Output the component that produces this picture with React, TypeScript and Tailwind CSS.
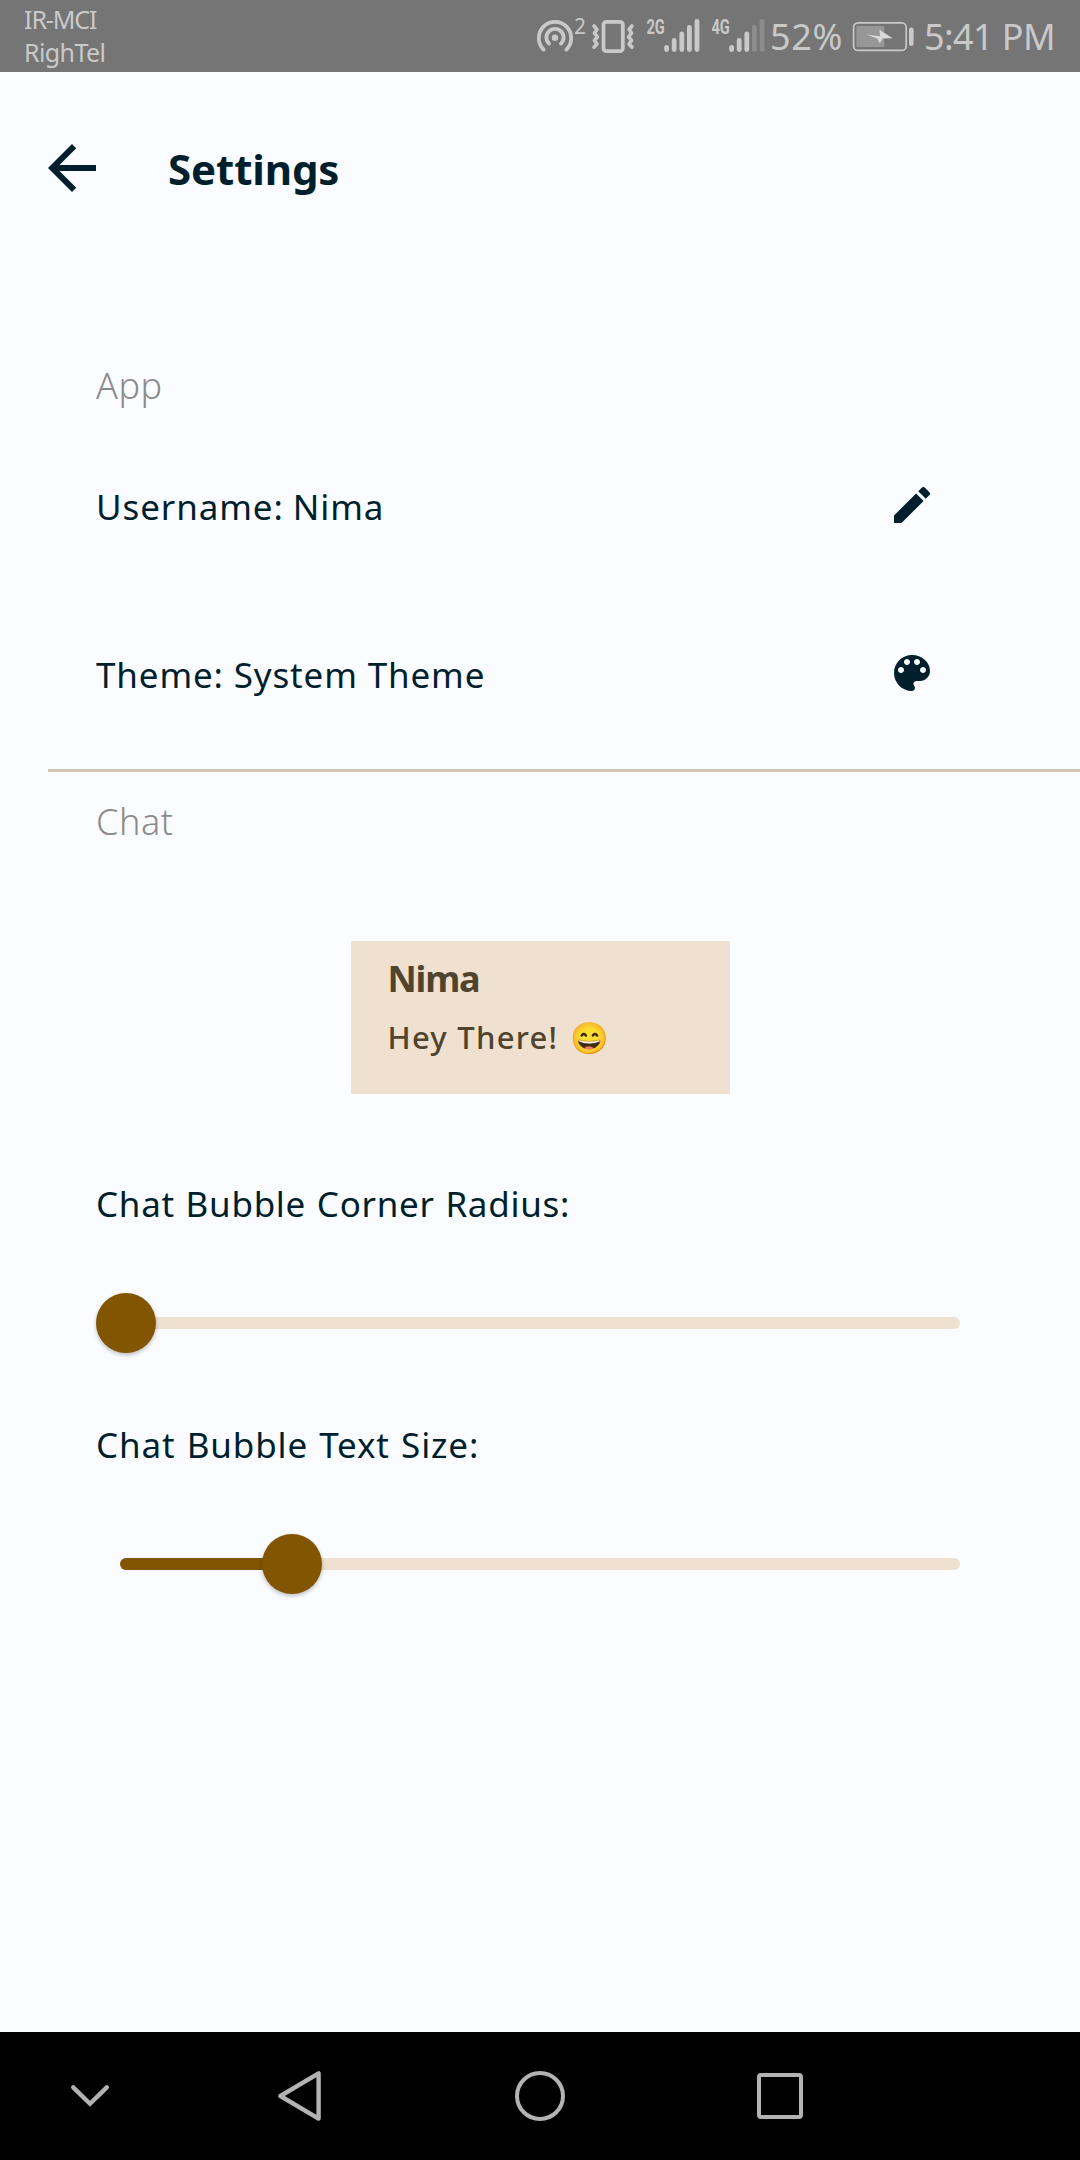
import type { ReactNode } from "react";

function SignalBars({ label, active }: { label: string; active: number }) {
  const tops = [45, 38, 31.5, 25, 19];
  return (
    <svg width="54" height="72" viewBox="0 0 54 72" className="shrink-0">
      <text
        x="-0.6"
        y="34"
        fontSize="20.5"
        fontWeight="700"
        fontFamily="Roboto, sans-serif"
        fill="#c9c9c9"
        textLength="18.4"
        lengthAdjust="spacingAndGlyphs"
      >
        {label}
      </text>
      {tops.map((top, i) => (
        <rect
          key={top}
          x={17.2 + i * 7.6}
          y={top}
          width="4.8"
          height={52 - top}
          rx="2.4"
          fill={i < active ? "#c9c9c9" : "#8d8d8d"}
        />
      ))}
    </svg>
  );
}

function StatusBar() {
  return (
    <div className="flex h-[72px] w-full shrink-0 justify-between bg-[#757575] text-[#c9c9c9]">
      <div className="flex flex-col pt-[3px] pl-6 text-[25px] leading-[33px]">
        <span className="tracking-[-1.1px]">IR-MCI</span>
        <span className="tracking-[-0.6px]">RighTel</span>
      </div>
      <div className="flex">
        <svg
          width="54"
          height="72"
          viewBox="536 0 54 72"
          fill="none"
          stroke="#c9c9c9"
          strokeWidth="3.8"
          strokeLinecap="round"
          className="shrink-0"
        >
          <path d="M543.6 49.6A16.2 16.2 0 1 1 566.4 49.6" />
          <path d="M549 43.6A8.6 8.6 0 1 1 561 43.6" />
          <circle cx="555" cy="37.8" r="3.2" fill="#c9c9c9" stroke="none" />
          <text x="574" y="34" fontSize="21" fontFamily="Noto Sans, sans-serif" fill="#c9c9c9" stroke="none">
            2
          </text>
        </svg>
        <svg
          width="57"
          height="72"
          viewBox="590 0 57 72"
          fill="none"
          stroke="#c9c9c9"
          strokeWidth="3.6"
          strokeLinecap="round"
          strokeLinejoin="round"
          className="shrink-0"
        >
          <rect x="603.5" y="21.8" width="19.3" height="29.4" rx="3" strokeWidth="3.8" />
          <path d="M594 26L597 29.5L594.4 33L597.4 36.8L594.4 40.5L597 44L594 47.2" />
          <path d="M632 26L629 29.5L631.6 33L628.6 36.8L631.6 40.5L629 44L632 47.2" />
        </svg>
        <SignalBars label="2G" active={5} />
        <div className="ml-[11px] flex">
          <SignalBars label="4G" active={3} />
        </div>
        <span className="ml-1 w-[82px] pt-px text-[36px] leading-[72px] tracking-[0.7px]">52%</span>
        <svg width="64" height="72" viewBox="852 0 64 72" className="shrink-0">
          <rect x="853.6" y="22.8" width="52.6" height="27.6" rx="4.5" fill="none" stroke="#c9c9c9" strokeWidth="1.7" />
          <rect x="856.4" y="26" width="27.8" height="21" rx="1" fill="#979797" />
          <rect x="909" y="27.5" width="4.6" height="18.5" rx="2.2" fill="#c9c9c9" />
          <path d="M866.3 34.4L880 36.2L879.4 29.8L892.7 38.2L882.6 38.4L879.8 43.4L877.2 38.6Z" fill="#d8d8d8" />
        </svg>
        <span className="ml-2 w-[156px] pt-px text-[36px] leading-[72px] tracking-[-0.6px] whitespace-nowrap">
          5:41 PM
        </span>
      </div>
    </div>
  );
}

function Header() {
  return (
    <div className="flex h-48 items-center pl-9">
      <svg width="72" height="72" viewBox="0 0 24 24" fill="#001f2d">
        <path d="M20 11H7.83l5.59-5.59L12 4l-8 8 8 8 1.41-1.41L7.83 13H20v-2z" />
      </svg>
      <h1 className="ml-15 pt-0.5 text-[42px] leading-[56px] font-bold tracking-[-0.1px]">Settings</h1>
    </div>
  );
}

function SectionLabel({ children }: { children: ReactNode }) {
  return (
    <h2 className="pl-24 text-[36px] leading-[48px] font-light tracking-[0.5px] text-[#8b8b8b]">{children}</h2>
  );
}

function SettingRow({ children, icon }: { children: ReactNode; icon: string }) {
  return (
    <div className="flex h-[168px] items-center justify-between pr-36 pl-24">
      <div className="pt-[3px]">{children}</div>
      <svg width="48" height="48" viewBox="0 0 24 24" fill="#001f2d">
        <path d={icon} />
      </svg>
    </div>
  );
}

function Slider({ value }: { value: number }) {
  return (
    <div className="flex h-15 items-center pr-30 pl-30">
      <div className="relative h-3 w-full rounded-full bg-[#efe0d0]">
        <div className="h-3 rounded-full bg-[#825500]" style={{ width: value }} />
        <div
          className="absolute -top-6 size-15 -translate-x-1/2 rounded-full bg-[#825500] shadow-[0_2px_4px_rgba(0,0,0,0.25)]"
          style={{ left: value }}
        />
      </div>
    </div>
  );
}

const pencil =
  "M3 17.25V21h3.75L17.81 9.94l-3.75-3.75L3 17.25zM20.71 7.04c.39-.39.39-1.02 0-1.41l-2.34-2.34c-.39-.39-1.02-.39-1.41 0l-1.83 1.83 3.75 3.75 1.83-1.83z";
const palette =
  "M12 3c-4.97 0-9 4.03-9 9s4.03 9 9 9c.83 0 1.5-.67 1.5-1.5 0-.39-.15-.74-.39-1.01-.23-.26-.38-.61-.38-.99 0-.83.67-1.5 1.5-1.5H16c2.76 0 5-2.24 5-5 0-4.42-4.03-8-9-8zm-5.5 9c-.83 0-1.5-.67-1.5-1.5S5.67 9 6.5 9 8 9.67 8 10.5 7.33 12 6.5 12zm3-4C8.67 8 8 7.33 8 6.5S8.67 5 9.5 5s1.5.67 1.5 1.5S10.33 8 9.5 8zm5 0c-.83 0-1.5-.67-1.5-1.5S13.67 5 14.5 5s1.5.67 1.5 1.5S15.33 8 14.5 8zm3 4c-.83 0-1.5-.67-1.5-1.5S16.67 9 17.5 9s1.5.67 1.5 1.5-.67 1.5-1.5 1.5z";

function NavBar() {
  return (
    <div className="flex h-32 shrink-0 items-center bg-black text-[#b3b3b3]">
      <svg width="40" height="24" viewBox="0 0 40 24" className="ml-[70px]" fill="none" stroke="currentColor" strokeWidth="4.4">
        <path d="M3.2 3.4L20 19.8L36.8 3.4" strokeLinecap="round" />
      </svg>
      <svg width="48" height="54" viewBox="0 0 48 54" className="ml-[166px]" fill="none" stroke="currentColor" strokeWidth="4.4">
        <path d="M42.6 4.4V49.6L4.4 27Z" strokeLinejoin="round" />
      </svg>
      <div className="ml-[191px] size-[50px] rounded-full border-4 border-current" />
      <div className="ml-[192px] size-[46px] rounded-[4px] border-4 border-current" />
    </div>
  );
}

export default function App() {
  return (
    <div className="flex h-[2160px] w-[1080px] flex-col overflow-hidden bg-[#fbfcff] font-['Noto_Sans',sans-serif] text-[#001f2d]">
      <StatusBar />
      <main className="flex-1">
        <Header />
        <div className="pt-[98px]">
          <SectionLabel>App</SectionLabel>
        </div>
        <div className="mt-[11px]">
          <SettingRow icon={pencil}>
            <p className="text-[35px] leading-[48px] tracking-[0.9px] [word-spacing:-1px]">Username: Nima</p>
          </SettingRow>
          <SettingRow icon={palette}>
            <p className="text-[35px] leading-[48px] tracking-[0.85px]">Theme: System Theme</p>
          </SettingRow>
        </div>
        <div className="mt-3 ml-12 h-[3px] bg-[#d3c4b8]" />
        <div className="pt-[26px]">
          <SectionLabel>Chat</SectionLabel>
        </div>
        <div className="mx-auto mt-[95px] h-[153px] w-[379px] bg-[#efe0d0] pt-[14px] pl-[37px] text-[#50442f]">
          <p className="text-[36px] leading-[48px] font-bold tracking-[-1.2px]">Nima</p>
          <p className="mt-[11px] flex items-center text-[31px] leading-[46px] font-medium">
            <span className="tracking-[1.25px]">Hey There!</span>
            <span className="ml-3 text-[31px]">😄</span>
          </p>
        </div>
        <p className="mt-[86px] pl-24 text-[35px] leading-[48px] tracking-[0.7px] [word-spacing:1px]">
          Chat Bubble Corner Radius:
        </p>
        <div className="pt-[65px]">
          <Slider value={6} />
        </div>
        <p className="mt-[68px] pl-24 text-[35px] leading-[48px] tracking-[0.85px] [word-spacing:1.3px]">
          Chat Bubble Text Size:
        </p>
        <div className="pt-[65px]">
          <Slider value={172} />
        </div>
      </main>
      <NavBar />
    </div>
  );
}
